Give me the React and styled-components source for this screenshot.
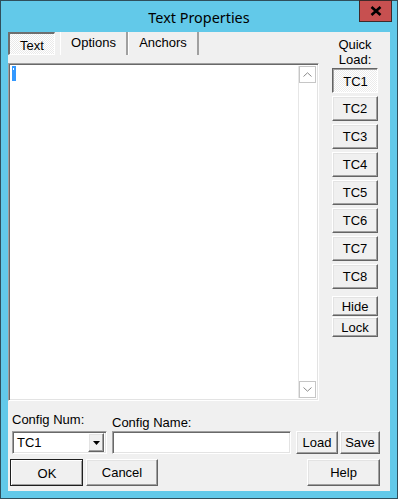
import React from "react";
import styled, { createGlobalStyle, css } from "styled-components";

const Global = createGlobalStyle`
  html, body { margin: 0; padding: 0; background: #62c9e9; }
  body { font-family: "Liberation Sans", Arial, sans-serif; font-size: 13px; color: #000; }
`;

const Frame = styled.div`
  width: 398px;
  height: 499px;
  box-sizing: border-box;
  border: 1px solid #2f4f5c;
  background: #62c9e9;
  display: flex;
  flex-direction: column;
`;

const TitleBar = styled.div`
  height: 30px;
  position: relative;
  display: flex;
  align-items: center;
  justify-content: center;
  font-family: "Noto Sans", "Open Sans", sans-serif;
  font-size: 14.4px;
  color: #000;
  padding-top: 1px;
`;

const CloseBtn = styled.div`
  position: absolute;
  right: 5px;
  top: -1px;
  width: 31px;
  height: 20px;
  background: #c75050;
  border: 1px solid #3e2a2a;
  display: flex;
  align-items: center;
  justify-content: center;
`;

const Body = styled.div`
  flex: 1;
  margin: 0 7px 7px 7px;
  background: #f0f0f0;
  display: flex;
  flex-direction: column;
`;

const TabRow = styled.div`
  display: flex;
  height: 23px;
  margin-bottom: 8px;
`;

const Tab = styled.div`
  box-sizing: border-box;
  height: 23px;
  width: ${(p) => p.w}px;
  margin-right: ${(p) => p.gap || 0}px;
  display: flex;
  align-items: center;
  justify-content: center;
  font-size: 13px;
  ${(p) =>
    p.active
      ? css`
          border-top: 2px solid #6e6e6e;
          border-left: 2px solid #6e6e6e;
          border-right: 1px solid #fff;
          border-bottom: 1px solid #fff;
          background: repeating-conic-gradient(#ffffff 0 25%, #e9e9e9 0 50%) 0 0 / 2px 2px;
          padding-top: 2px;
        `
      : css`
          border-left: 1px solid #fff;
          border-right: 2px solid #a0a0a0;
          padding-bottom: 2px;
        `}
`;

const Main = styled.div`
  display: flex;
  height: 338px;
`;

const Sunken = css`
  box-sizing: border-box;
  background: #fff;
  border-top: 1px solid #a0a0a0;
  border-left: 1px solid #a0a0a0;
  border-right: 1px solid #fff;
  border-bottom: 1px solid #fff;
  box-shadow: inset 1px 1px #696969, inset -1px -1px #e3e3e3;
`;

const TextBox = styled.div`
  ${Sunken}
  width: 311px;
  height: 338px;
  display: flex;
  padding: 2px;
`;

const TextArea = styled.div`
  flex: 1;
  padding: 0 1px;
`;

const Caret = styled.span`
  display: block;
  width: 4px;
  height: 15px;
  background: #3399ff;
  position: relative;
  &::after {
    content: "";
    position: absolute;
    left: 1px;
    top: 2px;
    width: 1px;
    height: 2px;
    background: #fff;
  }
`;

const ScrollBar = styled.div`
  width: 17px;
  display: flex;
  flex-direction: column;
  justify-content: space-between;
  background: #fff;
  border-left: 1px solid #e6e6e6;
`;

const Arrow = styled.div`
  box-sizing: border-box;
  height: 17px;
  border: 1px solid #c6c6c6;
  background: #fff;
  display: flex;
  align-items: center;
  justify-content: center;
`;

const Side = styled.div`
  display: flex;
  flex-direction: column;
  align-items: center;
  width: 46px;
  margin-top: -26px;
  margin-left: 13px;
`;

const QuickLabel = styled.div`
  text-align: center;
  line-height: 15px;
  font-size: 13px;
  margin-bottom: 1px;
  white-space: nowrap;
`;

const raised = css`
  box-sizing: border-box;
  background: #f0f0f0;
  border-top: 1px solid #fff;
  border-left: 1px solid #fff;
  border-right: 1px solid #646464;
  border-bottom: 1px solid #646464;
  box-shadow: inset -1px -1px #a0a0a0, inset 1px 1px #e3e3e3;
  display: flex;
  align-items: center;
  justify-content: center;
  font-size: 13px;
`;

const Button = styled.div`
  ${raised}
  flex-shrink: 0;
  width: ${(p) => p.w}px;
  height: ${(p) => p.h}px;
  margin-bottom: ${(p) => p.mb || 0}px;
  ${(p) =>
    p.pressed &&
    css`
      border-top: 1px solid #646464;
      border-left: 1px solid #646464;
      border-right: 1px solid #fff;
      border-bottom: 1px solid #fff;
      box-shadow: inset 1px 1px #a0a0a0;
      background: repeating-conic-gradient(#ffffff 0 25%, #ebebeb 0 50%) 0 0 / 2px 2px;
      padding: 1px 0 0 1px;
    `}
  ${(p) =>
    p.def &&
    css`
      outline: 1px solid #1f1f1f;
      outline-offset: -1px;
      border-top: 2px solid #fff;
      border-left: 2px solid #fff;
      box-shadow: inset -1px -1px #a0a0a0;
    `}
`;

const Bottom = styled.div`
  display: grid;
  grid-template-columns: 100px 184px 44px 40px;
  padding: 11px 0 0 4px;
`;

const Label = styled.div`
  font-size: 13px;
  height: 16px;
  padding-top: ${(p) => p.pt || 0}px;
  margin-bottom: ${(p) => (p.pt ? 0 : 3)}px;
`;

const Combo = styled.div`
  ${Sunken}
  width: 95px;
  height: 23px;
  display: flex;
  align-items: center;
  padding: 2px;
`;

const ComboText = styled.div`
  flex: 1;
  padding-left: 2px;
  font-size: 13px;
`;

const DropBtn = styled.div`
  ${raised}
  width: 16px;
  height: 19px;
`;

const Input = styled.div`
  ${Sunken}
  width: 179px;
  height: 23px;
`;

const ButtonRow = styled.div`
  display: flex;
  padding: 5px 10px 0 2px;
`;

const Spacer = styled.div`
  flex: 1;
`;

const Gap = styled.div`
  width: ${(p) => p.w}px;
`;

const tcs = ["TC1", "TC2", "TC3", "TC4", "TC5", "TC6", "TC7", "TC8"];

export default function App() {
  return (
    <>
      <Global />
      <Frame>
        <TitleBar>
          Text Properties
          <CloseBtn>
            <svg width="12" height="10" viewBox="0 0 12 10">
              <path d="M1.5 1 L10.5 9 M10.5 1 L1.5 9" stroke="#000" strokeWidth="2.6" />
            </svg>
          </CloseBtn>
        </TitleBar>
        <Body>
          <TabRow>
            <Tab active w={47} gap={5}>Text</Tab>
            <Tab w={68}>Options</Tab>
            <Tab w={71}>Anchors</Tab>
          </TabRow>
          <Main>
            <TextBox>
              <TextArea>
                <Caret />
              </TextArea>
              <ScrollBar>
                <Arrow>
                  <svg width="9" height="5" viewBox="0 0 9 5">
                    <path d="M0.5 4.5 L4.5 0.8 L8.5 4.5" fill="none" stroke="#8a8a8a" strokeWidth="1" />
                  </svg>
                </Arrow>
                <Arrow>
                  <svg width="9" height="5" viewBox="0 0 9 5">
                    <path d="M0.5 0.5 L4.5 4.2 L8.5 0.5" fill="none" stroke="#8a8a8a" strokeWidth="1" />
                  </svg>
                </Arrow>
              </ScrollBar>
            </TextBox>
            <Side>
              <QuickLabel>
                Quick
                <br />
                Load:
              </QuickLabel>
              {tcs.map((t, i) => (
                <Button key={t} w={46} h={25} mb={i === 7 ? 7 : 3} pressed={i === 0}>
                  {t}
                </Button>
              ))}
              <Button w={46} h={20} mb={1}>Hide</Button>
              <Button w={46} h={20}>Lock</Button>
            </Side>
          </Main>
          <Bottom>
            <div>
              <Label>Config Num:</Label>
              <Combo>
                <ComboText>TC1</ComboText>
                <DropBtn>
                  <svg width="7" height="4" viewBox="0 0 7 4">
                    <path d="M0 0 H7 L3.5 4 Z" fill="#000" />
                  </svg>
                </DropBtn>
              </Combo>
            </div>
            <div>
              <Label pt={3}>Config Name:</Label>
              <Input />
            </div>
            <div>
              <Label />
              <Button w={42} h={23}>Load</Button>
            </div>
            <div>
              <Label />
              <Button w={40} h={23}>Save</Button>
            </div>
          </Bottom>
          <ButtonRow>
            <Button def w={73} h={27}>OK</Button>
            <Gap w={3} />
            <Button w={72} h={27}>Cancel</Button>
            <Spacer />
            <Button w={73} h={27}>Help</Button>
          </ButtonRow>
        </Body>
      </Frame>
    </>
  );
}
